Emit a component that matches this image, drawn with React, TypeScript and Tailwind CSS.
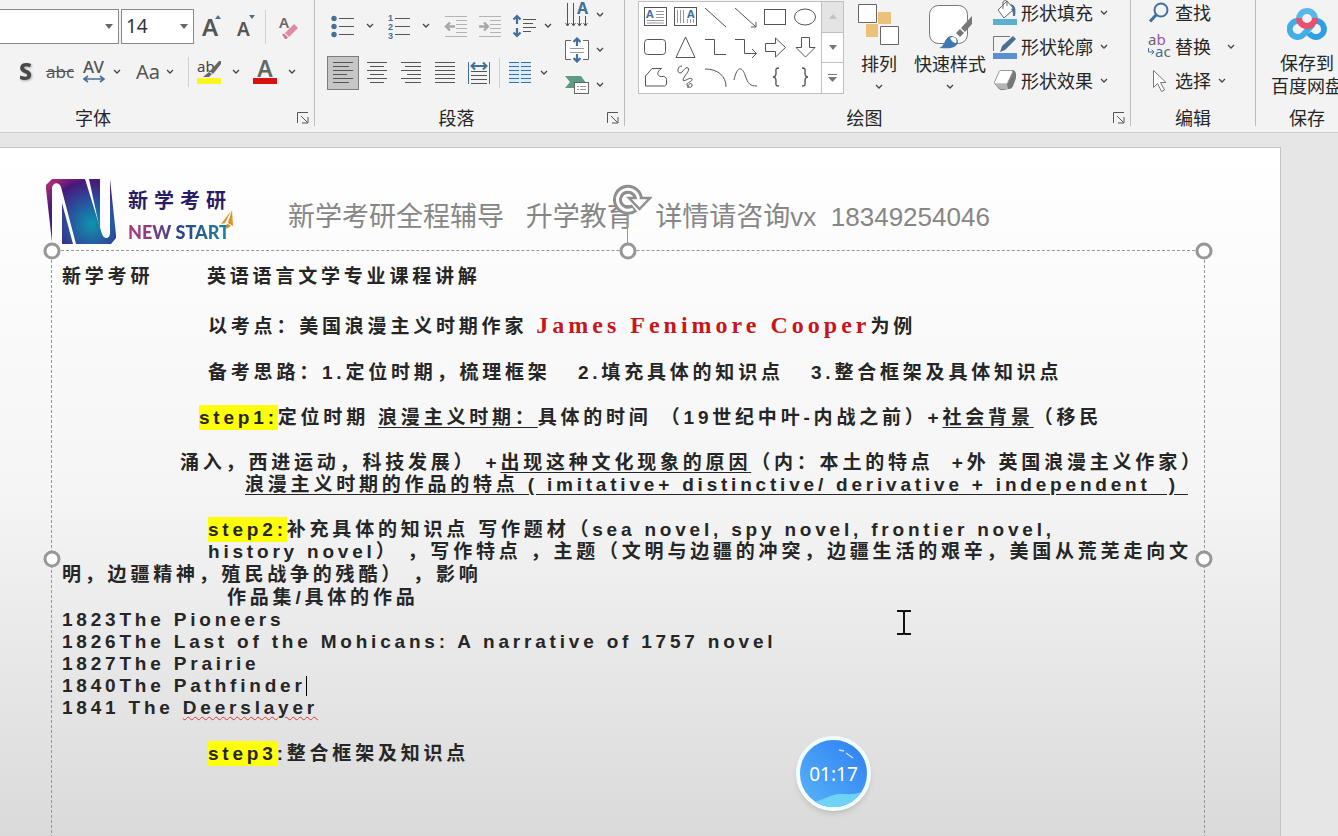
import type { ReactNode } from "react";

const CJK = "font-['Noto_Sans','Noto_Sans_CJK_SC',sans-serif]";

export default function App() {
  return (
    <div className={`h-screen flex flex-col overflow-hidden bg-[#e6e6e6] text-[#262626] ${CJK}`}>
      {/* Ribbon */}
      <header className="flex-none h-[133px] flex overflow-hidden bg-[#f3f3f3] border-b border-[#cfcfcf]">
        <FontGroup />
        <ParagraphGroup />
        <DrawingGroup />
        <EditGroup />
        <SaveGroup />
      </header>

      {/* Slide */}
      <main className="flex-1 min-h-0 mt-[14px] mr-[57px] border-t border-r border-[#c4c4c4] bg-linear-to-b from-white via-[#f5f5f5] to-[#dadada] overflow-hidden">
        <div className="h-[102px] flex items-start pl-[46px] pt-[30px]">
          <Logo />
          <p className="ml-[52px] mt-4 text-[26px] leading-[46px] text-[#868686] whitespace-pre font-['Liberation_Sans','Noto_Sans_CJK_SC',sans-serif]">
            <Wide>新学考研全程辅导</Wide>{"   "}<Wide>升学教育</Wide>{"   "}<Wide>详情请咨询</Wide>{"vx  18349254046"}
          </p>
        </div>
        <SlideText />
      </main>

      <IBeam />
      <Timer />
    </div>
  );
}

function Wide({ children }: { children: string }) {
  return <span className="text-[27px]">{children}</span>;
}

// ---------- Ribbon pieces ----------

interface GroupProps { title: string; className: string; launcher?: boolean; children: ReactNode }
function Group({ title, className, launcher, children }: GroupProps) {
  return (
    <section className={`flex-none h-[126px] flex flex-col border-r border-[#bdbdbd] ${className}`}>
      <div className="h-[110px] flex">{children}</div>
      <div className="flex items-center h-4 text-[18px] leading-4">
        <h2 className="flex-1 text-center">{title}</h2>
        {launcher && (
          <button aria-label={`${title}设置`} className="w-[26px] flex justify-end pr-[5px]">
            <svg width="12" height="12" viewBox="0 0 12 12" fill="none" stroke="#555">
              <path d="M.5 11V.5H11M4 4l6.500 6.500M11 5v6H5" />
            </svg>
          </button>
        )}
      </div>
    </section>
  );
}

function Chevron() {
  return (
    <svg width="8" height="6" viewBox="0 0 8 6" fill="none" stroke="#444" strokeWidth="1.300">
      <path d="M1 1l3 3 3-3" />
    </svg>
  );
}

interface ToolProps { label: string; className?: string; menu?: boolean; children: ReactNode }
function Tool({ label, className = "", menu, children }: ToolProps) {
  return (
    <button aria-label={label} className={`flex items-center ${className}`}>
      {children}
      {menu && <Chevron />}
    </button>
  );
}

function Combo({ label, value, className }: { label: string; value: string; className: string }) {
  return (
    <div className={`relative h-[35px] ${className}`}>
      <select aria-label={label} defaultValue={value} className="appearance-none w-full h-full bg-white border border-[#8a8a8a] pl-1 text-[19px] text-[#333]">
        <option value={value}>{value}</option>
      </select>
      <svg className="absolute right-1.5 top-[15px] pointer-events-none" width="8" height="5" viewBox="0 0 8 5">
        <path d="M0 0h8L4 5z" fill="#666" />
      </svg>
    </div>
  );
}

function FontGroup() {
  return (
    <Group title="字体" launcher className="w-[417px] -ml-[102px]">
      <div className="flex flex-col gap-3 pt-[9px] pl-[102px]">
        <div className="flex items-center">
          <Combo label="字体名称" value="" className="w-[221px] -ml-[102px]" />
          <Combo label="字号" value="14" className="w-[73px] ml-[2px]" />
          <Tool label="增大字号" className="ml-[7px]">
            <svg className="overflow-visible" width="24" height="28" viewBox="0 0 24 28">
              <text x="1" y="23" fontSize="24" fontWeight="600" fill="#555" fontFamily="Noto Sans">A</text>
              <path d="M14 6l3-4 3 4z" fill="#4a6f95" />
            </svg>
          </Tool>
          <Tool label="减小字号" className="ml-[11px]">
            <svg className="overflow-visible" width="24" height="28" viewBox="0 0 24 28">
              <text x="1" y="23" fontSize="19" fontWeight="600" fill="#555" fontFamily="Noto Sans">A</text>
              <path d="M13 2h6l-3 4z" fill="#4a6f95" />
            </svg>
          </Tool>
          <i className="w-px h-[34px] bg-[#d0d0d0] ml-[5px]" />
          <Tool label="清除格式" className="ml-[12px]">
            <svg className="overflow-visible" width="20" height="26" viewBox="0 0 20 26">
              <text x="1" y="14" fontSize="15" fontWeight="600" fill="#666" fontFamily="Noto Sans">A</text>
              <path d="M7 19l9-9 4 4-9 9z" fill="#dd8ba0" />
              <path d="M4 20.500l2-1 4 4-1.500 1.500H7z" fill="#d17890" />
            </svg>
          </Tool>
        </div>
        <div className="flex items-center h-8">
          <Tool label="文字阴影" className="ml-[18px]">
            <svg className="overflow-visible" width="16" height="24" viewBox="0 0 16 24">
              <text x="1" y="20" fill="#484848" fontFamily="Noto Sans" fontSize="23" fontWeight="800" className="drop-shadow-[1px_1px_1px_#aaa]">S</text>
            </svg>
          </Tool>
          <Tool label="删除线" className="ml-[14px] text-[17px] leading-6 text-[#555] line-through">
            <span className="w-6 flex justify-center">abc</span>
          </Tool>
          <Tool label="字符间距" menu className="ml-[11px] gap-2">
            <svg className="overflow-visible" width="22" height="24" viewBox="0 0 22 24">
              <text x="0" y="13" fontSize="17" fontWeight="500" fill="#555" fontFamily="Noto Sans">AV</text>
              <path d="M1 19h20M5 16l-4 3 4 3M17 16l4 3-4 3" fill="none" stroke="#4a6f95" strokeWidth="1.600" />
            </svg>
          </Tool>
          <Tool label="更改大小写" menu className="ml-[15px] gap-1.5 text-[20px] leading-6 text-[#555]">
            <span className="w-6">Aa</span>
          </Tool>
          <i className="w-px h-[30px] bg-[#d0d0d0] ml-[14px]" />
          <Tool label="文本突出显示" menu className="ml-2 gap-[11px]">
            <svg className="overflow-visible" width="24" height="26" viewBox="0 0 24 26">
              <text x="0" y="13" fontSize="15" fill="#444" fontFamily="Noto Sans">ab</text>
              <rect y="19" width="24" height="6" fill="#f8f520" />
              <path d="M22 2l-9 10 3 3L24 5V2zM12 13l-6 5h6l3-3z" fill="#666" />
            </svg>
          </Tool>
          <Tool label="字体颜色" menu className="ml-[13px] gap-[11px]">
            <svg className="overflow-visible" width="24" height="26" viewBox="0 0 24 26">
              <text x="12" y="18" fontSize="23" fontWeight="600" fill="#666" textAnchor="middle" fontFamily="Noto Sans">A</text>
              <rect y="19" width="24" height="6" fill="#d8110f" />
            </svg>
          </Tool>
        </div>
      </div>
    </Group>
  );
}

function AlignIcon({ d }: { d: string }) {
  return (
    <svg width="20" height="22" viewBox="0 0 20 22" stroke="#555">
      <path d={d} />
    </svg>
  );
}

function ParagraphGroup() {
  return (
    <Group title="段落" launcher className="w-[310px]">
      <div className="w-[250px] flex flex-col gap-[13px] pt-[9px]">
        <div className="flex items-center h-[34px] pl-[15px]">
          <Tool label="项目符号" menu className="gap-3">
            <svg width="24" height="24" viewBox="0 0 24 24">
              <path d="M9 4.500h15M9 12.500h15M9 20.500h15" stroke="#555" />
              <g fill="#4a6f95"><circle cx="4" cy="4.500" r="2.700" /><circle cx="4" cy="12.500" r="2.700" /><circle cx="4" cy="20.500" r="2.700" /></g>
            </svg>
          </Tool>
          <Tool label="编号" menu className="ml-3 gap-3">
            <svg className="overflow-visible" width="24" height="26" viewBox="0 0 24 26">
              <path d="M9 5.500h15M9 13.500h15M9 21.500h15" stroke="#555" />
              <g fill="#4a6f95" fontSize="9" fontWeight="600" fontFamily="Liberation Sans">
                <text x="2" y="8">1</text><text x="2" y="17">2</text><text x="2" y="26">3</text>
              </g>
            </svg>
          </Tool>
          <Tool label="减少缩进" className="ml-[14px]">
            <svg width="24" height="24" viewBox="0 0 24 24" stroke="#b4b4b4" fill="none">
              <path d="M1 2.500h22M12 6.500h11M12 10.500h11M12 14.500h11M12 18.500h11M1 22.500h22" />
              <path d="M11 12.500H3M6 8.500l-4 4 4 4" strokeWidth="2.400" stroke="#a8a8a8" />
            </svg>
          </Tool>
          <Tool label="增加缩进" className="ml-[10px]">
            <svg width="24" height="24" viewBox="0 0 24 24" stroke="#b4b4b4" fill="none">
              <path d="M1 2.500h22M12 6.500h11M12 10.500h11M12 14.500h11M12 18.500h11M1 22.500h22" />
              <path d="M1 12.500h8M6 8.500l4 4-4 4" strokeWidth="2.400" stroke="#a8a8a8" />
            </svg>
          </Tool>
          <Tool label="行距" menu className="ml-[10px] gap-2">
            <svg width="24" height="24" viewBox="0 0 24 24" fill="none">
              <path d="M11 5.500h13M11 9.500h10M11 13.500h13M11 17.500h8" stroke="#555" />
              <path d="M5 2v8M1.500 5.500L5 2l3.500 3.500M5 14v8M1.500 18.500L5 22l3.500-3.500" stroke="#41709f" strokeWidth="2.200" />
            </svg>
          </Tool>
        </div>
        <div className="flex items-center h-[34px] pl-3">
          <div className="flex gap-[2px]">
            <Tool label="左对齐" className="w-8 h-[34px] justify-center bg-[#c6c6c6] border border-[#7d7d7d]">
              <AlignIcon d="M0 .500h20M0 4.500h16M0 8.500h20M0 12.500h14M0 16.500h20M0 20.500h16" />
            </Tool>
            <Tool label="居中" className="w-8 h-[34px] justify-center">
              <AlignIcon d="M0 .500h20M3 4.500h14M0 8.500h20M3 12.500h14M0 16.500h20M3 20.500h14" />
            </Tool>
            <Tool label="右对齐" className="w-8 h-[34px] justify-center">
              <AlignIcon d="M0 .500h20M4 4.500h16M0 8.500h20M6 12.500h14M0 16.500h20M4 20.500h16" />
            </Tool>
            <Tool label="两端对齐" className="w-8 h-[34px] justify-center">
              <AlignIcon d="M0 .500h20M0 4.500h20M0 8.500h20M0 12.500h20M0 16.500h20M0 20.500h20" />
            </Tool>
            <Tool label="分散对齐" className="w-8 h-[34px] justify-center">
              <svg width="22" height="24" viewBox="0 0 22 24" fill="none">
                <path d="M.5 1v22M21.500 1v22" stroke="#41709f" />
                <path d="M3 10.500h16M3 14.500h16M3 18.500h16M3 22.500h16" stroke="#555" />
                <path d="M4 5h14M7 1.500L3.500 5 7 8.500M15 1.500L18.500 5 15 8.500" stroke="#41709f" strokeWidth="2" />
              </svg>
            </Tool>
          </div>
          <i className="w-px h-[30px] bg-[#d0d0d0] ml-1" />
          <Tool label="分栏" menu className="ml-[9px] gap-[9px]">
            <svg width="22" height="24" viewBox="0 0 22 24" stroke="#41709f">
              <path fill="#dcebf8" stroke="none" d="M0 1h22v21H0z" />
              <path d="M0 1.500h10M0 5.500h10M0 9.500h10M0 13.500h10M0 17.500h10M0 21.500h10M12 1.500h10M12 5.500h10M12 9.500h10M12 13.500h10M12 17.500h10M12 21.500h10" />
            </svg>
          </Tool>
        </div>
      </div>
      <div className="flex flex-col">
        <Tool label="文字方向" menu className="h-[30px] gap-[7px]">
          <svg className="overflow-visible" width="24" height="26" viewBox="0 0 24 26" fill="none" stroke="#555">
            <path d="M2.500 1v23M8.500 1v23M14.500 14v10M20.500 14v10M.5 21l2 3 2-3M6.500 21l2 3 2-3M12.500 21l2 3 2-3M18.500 21l2 3 2-3" />
            <text x="12" y="12" fontSize="16" fontWeight="700" fill="#41709f" stroke="none" fontFamily="Noto Sans">A</text>
          </svg>
        </Tool>
        <Tool label="对齐文本" menu className="h-10 gap-[7px]">
          <svg width="24" height="26" viewBox="0 0 24 26" fill="none">
            <path d="M.5 3.500h23v19H.5z" fill="#fff" />
            <path d="M6 3.500H.5v19H6M18 3.500h5.500v19H18" stroke="#666" />
            <path d="M5 11.500h14M5 15.500h14" stroke="#999" />
            <path d="M12 9V2M8.500 5L12 1.500 15.500 5M12 17v7M8.500 21l3.500 3.500 3.500-3.500" stroke="#41709f" strokeWidth="2.200" />
          </svg>
        </Tool>
        <Tool label="转换为 SmartArt" menu className="h-[30px] gap-[7px]">
          <svg width="24" height="20" viewBox="0 0 24 20">
            <path d="M0 1h16l5 7-4 5H0l5-6z" fill="#5d9b82" />
            <rect x="9.500" y="7.500" width="14" height="11" fill="#fff" stroke="#666" />
            <path d="M12 11.500h2M15 11.500h6M12 14.500h2M15 14.500h6" stroke="#999" />
          </svg>
        </Tool>
      </div>
    </Group>
  );
}

const shapes: { name: string; icon: ReactNode }[] = [
  { name: "文本框", icon: <><rect x="1.500" y="2.500" width="22" height="18" fill="#fff" /><path d="M13 6.500h8M13 9.500h8M13 12.500h8M4 15.500h17M4 18h17" stroke="#999" /><text x="3" y="13" fontSize="11" fontWeight="700" fill="#41709f" stroke="none">A</text></> },
  { name: "竖排文本框", icon: <><rect x="1.500" y="2.500" width="22" height="18" fill="#fff" /><path d="M4.500 5v13M7.500 5v13M10.500 5v13M14.500 14v4M17.500 14v4M20.500 14v4" stroke="#999" /><text x="14" y="13" fontSize="11" fontWeight="700" fill="#41709f" stroke="none">A</text></> },
  { name: "直线", icon: <path d="M2 3l21 19" /> },
  { name: "箭头", icon: <path d="M2 3l21 19M23 17v5h-5" /> },
  { name: "矩形", icon: <rect x="1.500" y="4.500" width="21" height="15" /> },
  { name: "椭圆", icon: <ellipse cx="12" cy="12" rx="10.500" ry="8" /> },
  { name: "圆角矩形", icon: <rect x="1.500" y="4.500" width="21" height="15" rx="3" /> },
  { name: "三角形", icon: <path d="M12.500 2L22 22.500H3z" /> },
  { name: "肘形连接符", icon: <path d="M2 4.500h9.500v15H23" /> },
  { name: "肘形箭头", icon: <path d="M2 4.500h9.500v14H23M19 14l4.500 4.500L19 23" /> },
  { name: "右箭头", icon: <path d="M2.500 8.500h10V3l10 9.500-10 9.500v-5.500h-10z" /> },
  { name: "下箭头", icon: <path d="M8.500 2.500h8v10H22L12.500 22 3 12.500h5.500z" /> },
  { name: "任意多边形", icon: <path d="M9 3.500h9.500c-5 3-5 8 0 8 3.500-.500 5 1 5 3v5l-2 1.500h-19V11z" /> },
  { name: "自由曲线", icon: <path d="M9 1C4 1 4 8 7 8s5-7 8-5-5 9-5 12 8-4 9-1-6 3-5 6 5 3 5 0-5-1-4 3" /> },
  { name: "弧形", icon: <path d="M2 4c13 0 21 7 21 18" /> },
  { name: "曲线", icon: <path d="M1 15C4 1 9 1 12 10s5 11 12 11" /> },
  { name: "左大括号", icon: <path d="M16 3c-4 0-3 2-3 5s-1 4-3 4c2 0 3 1 3 4s-1 5 3 5" strokeWidth="1.400" /> },
  { name: "右大括号", icon: <path d="M9 3c4 0 3 2 3 5s1 4 3 4c-2 0-3 1-3 4s1 5-3 5" strokeWidth="1.400" /> },
];

function DrawingGroup() {
  return (
    <Group title="绘图" launcher className="w-[506px]">
      <div className="flex ml-[13px] mt-px h-[93px] border border-[#c0c0c0] bg-white">
        <div className="grid grid-cols-[repeat(6,30px)] grid-rows-[repeat(3,30px)] w-[182px] pl-px">
          {shapes.map((s) => (
            <button key={s.name} aria-label={s.name} className="flex items-center justify-center">
              <svg width="25" height="24" viewBox="0 0 25 24" fill="none" stroke="#555" fontFamily="Noto Sans">{s.icon}</svg>
            </button>
          ))}
        </div>
        <div className="w-[22px] border-l border-[#c0c0c0] flex flex-col divide-y divide-[#c0c0c0]">
          <button aria-label="上一行" className="flex-1 flex items-center justify-center bg-[#e4e4e4]">
            <svg width="8" height="5"><path d="M0 5h8L4 0z" fill="#c3c3c3" /></svg>
          </button>
          <button aria-label="下一行" className="flex-1 flex items-center justify-center">
            <svg width="8" height="5"><path d="M0 0h8L4 5z" fill="#777" /></svg>
          </button>
          <button aria-label="其他" className="flex-1 flex items-center justify-center">
            <svg width="9" height="9"><path d="M0 .5h9" stroke="#777" /><path d="M0 3h9L4.500 8z" fill="#777" /></svg>
          </button>
        </div>
      </div>
      <button className="w-[60px] ml-[5px] flex flex-col items-center pt-[3px] text-[18px] leading-[22px]">
        <svg width="42" height="45" viewBox="0 0 42 45">
          <path d="M20 9h13v12H20zM8 21h12v13H8z" fill="#ecc27b" />
          <path d="M.5 1.500h18v18H.5zM22.500 23.500h18v18h-18z" fill="#fff" stroke="#666" />
        </svg>
        <span className="mt-[5px] mb-[9px] h-[22px]">排列</span>
        <Chevron />
      </button>
      <button className="w-[80px] ml-px flex flex-col items-center pt-[3px] text-[18px] leading-[22px]">
        <svg width="46" height="50" viewBox="0 0 46 50">
          <rect x="2.500" y="2.500" width="38" height="38" rx="9" fill="#fff" stroke="#777" />
          <path d="M45 13v8l-7 8-4-4zM33 26l4 4-4 4-4-4z" fill="#777" />
          <path d="M12 45c7-2 5-12 13-12 7 1 8 8 2 11-4 2-9 1-15 1z" fill="#3f77b0" />
          <path d="M23 35c4-3 8 1 6 5-2 0-5-2-6-5z" fill="#fff" />
        </svg>
        <span className="h-[22px] mb-[9px] whitespace-nowrap">快速样式</span>
        <Chevron />
      </button>
      <div className="flex flex-col ml-[3px] -mt-1">
        <LabelTool text="形状填充">
          <path d="M5 10L14 1l7 8-10 9z" fill="#fff" stroke="#666" />
          <path d="M10 9V2c1-2 4-2 4 0v4" fill="none" stroke="#666" />
          <path d="M17 4c6 1 6 6 5 12h-2c0-3 0-5-2-7l2-1z" fill="#4a6f95" />
          <path d="M0 19h24v6H0z" fill="#5bb0d0" />
        </LabelTool>
        <LabelTool text="形状轮廓">
          <path d="M.5 17V2.500H17" fill="none" stroke="#777" />
          <path d="M7 18l2-6L20 2l3 3-11 11z" fill="#4a6f95" />
          <path d="M0 19h24v6H0z" fill="#5b8fd0" />
        </LabelTool>
        <LabelTool text="形状效果">
          <path d="M1 15l5 6c1 1 2 1 4 1l6-1c2 0 3-1 4-3l3-8V6c0-2-2-4-4-4z" fill="#777" />
          <path d="M8 2.500h10c1 0 2 1 1.500 2L15 14c0 1-1 2-2 2H3c-1 0-2-1-1.500-2L6 4c0-1 1-1.500 2-1.500z" fill="#fff" stroke="#999" />
          <path d="M2 16h12l1 5H7z" fill="#b5b5b5" />
        </LabelTool>
      </div>
    </Group>
  );
}

function LabelTool({ text, children }: { text: string; children: ReactNode }) {
  return (
    <button className="h-[34px] flex items-center text-[18px] leading-[22px] whitespace-nowrap">
      <svg width="24" height="26" viewBox="0 0 24 26">{children}</svg>
      <span className="ml-1 mr-[7px]">{text}</span>
      <Chevron />
    </button>
  );
}

function EditGroup() {
  return (
    <Group title="编辑" className="w-[125px]">
      <div className="flex flex-col pl-4 -mt-1 text-[18px] leading-[22px]">
        <button className="h-[34px] flex items-center gap-[3px]">
          <svg width="25" height="24" viewBox="0 0 25 24" fill="none" stroke="#41709f">
            <circle cx="14" cy="9" r="6.500" strokeWidth="2" />
            <path d="M9.500 13.500L3 20.500" strokeWidth="3" />
          </svg>
          查找
        </button>
        <button className="h-[34px] flex items-center gap-[3px]">
          <svg className="overflow-visible" width="25" height="26" viewBox="0 0 25 26" fontFamily="Noto Sans" fontSize="15">
            <text x="1" y="11" fill="#666">a<tspan fill="#9455a8">b</tspan></text>
            <text x="8" y="23" fill="#41709f">a<tspan fill="#666">c</tspan></text>
            <path d="M1.500 14v4H7M4.500 15.500L7 18l-2.500 2.500" fill="none" stroke="#41709f" />
          </svg>
          <span className="mr-[13px]">替换</span>
          <Chevron />
        </button>
        <button className="h-[34px] flex items-center gap-[3px]">
          <svg width="25" height="24" viewBox="0 0 25 24" fill="#fff" stroke="#777">
            <path d="M6.500 1.500v17l4-4 4 8 3-1.500-4-7.500h5.500z" />
          </svg>
          <span className="mr-1">选择</span>
          <Chevron />
        </button>
      </div>
    </Group>
  );
}

function SaveGroup() {
  return (
    <Group title="保存" className="w-[103px]">
      <button className="w-full h-full flex flex-col items-center pt-[7px] text-[18px] leading-[23px] whitespace-nowrap">
        <svg width="40" height="33" viewBox="0 0 40 33" fill="none" strokeWidth="6">
          <path d="M11.500 14a8 8 0 1 0 5 13.500L26 17" stroke="#41aee8" />
          <path d="M22 26a8 8 0 1 0 6.500-12" stroke="#2f9fe2" />
          <path d="M12 12a8 8 0 1 1 16 0" stroke="#58b8ea" />
          <path d="M12 11a8 8 0 0 0 16 0" stroke="#e8506e" />
        </svg>
        <span className="mt-3">保存到</span>
        <span>百度网盘</span>
      </button>
    </Group>
  );
}

// ---------- Slide ----------

function Logo() {
  return (
    <div className="flex-none w-[190px] flex">
      <svg width="70" height="67" viewBox="0 0 70 67">
        <defs>
          <radialGradient id="n-fill" gradientUnits="userSpaceOnUse" cx="46" cy="46" r="58">
            <stop offset="0" stopColor="#0d94ad" />
            <stop offset=".42" stopColor="#2a4f9c" />
            <stop offset=".75" stopColor="#47187a" />
            <stop offset="1" stopColor="#a62a78" />
          </radialGradient>
        </defs>
        <g fill="url(#n-fill)">
          <path d="M6 1h33l17 55c2 6 8 5 8-1V1l6 56v3l-5 6H30L15 9C13 4 7 4 6 10v54L0 11V7z" />
          <path d="M16 25v41h11z" />
          <path d="M43 1h11v51z" />
        </g>
      </svg>
      <div className="ml-3 mt-[10px] flex flex-col">
        <span className="text-[20px] leading-[26px] font-bold tracking-[6px] text-[#2a1b66]">新学考研</span>
        <span className="mt-[6px] text-[18px] leading-6 font-black font-['Lato',sans-serif] whitespace-nowrap bg-linear-to-r from-[#b8327c] via-[#2b3f86] to-[#12909f] bg-clip-text text-transparent">NEW START</span>
      </div>
      <svg className="-ml-3 mt-8 flex-none" width="14" height="20" viewBox="0 0 14 20">
        <path d="M12 0l1 16-5-3zM11 1L1 14l4-1zM8 14l3 2-5 3 1-5z" fill="#e58f1c" />
      </svg>
    </div>
  );
}

function Handle({ className }: { className: string }) {
  return <span className={`absolute w-[17px] h-[17px] rounded-full border-3 border-[#979797] bg-white -translate-x-1/2 -translate-y-1/2 ${className}`} />;
}

function Mark({ children }: { children: ReactNode }) {
  return <mark className="bg-[#ffff0a] text-inherit py-[2px]">{children}</mark>;
}

function SlideText() {
  return (
    <article className="relative ml-[51px] mr-[75px] min-h-[618px] border border-dashed border-[#979797] pt-[15px] pl-[10px] text-[19px] leading-[22px] font-bold tracking-[0.2em] whitespace-pre text-[#262626] font-['Liberation_Sans','Noto_Sans_CJK_SC',sans-serif]">
      {/* rotate grip */}
      <svg className="absolute left-1/2 -top-[71px] -ml-4" width="40" height="64" viewBox="0 0 40 64" fill="none">
        <path d="M15.500 32v32" stroke="#979797" />
        <path d="M26.500 20a10.500 10.500 0 1 0-4 8" stroke="#8f8f8f" strokeWidth="9" />
        <path d="M17 18h21L27.500 29z" fill="#fff" stroke="#8f8f8f" strokeWidth="2.500" />
        <path d="M26.500 21v-1a10.500 10.500 0 1 0-5.500 9" stroke="#fff" strokeWidth="3" />
      </svg>
      <Handle className="left-0 top-0" />
      <Handle className="left-1/2 top-0" />
      <Handle className="left-full top-0" />
      <Handle className="left-0 top-1/2" />
      <Handle className="left-full top-1/2" />

      <p className="flex"><span className="w-[145px]">新学考研</span>英语语言文学专业课程讲解</p>
      <p className="mt-[25px] pl-[146px]">
        {"以考点：美国浪漫主义时期作家 "}
        <span className="text-[24px] leading-none tracking-[4px] text-[#c8171c] font-['Liberation_Serif',serif]">James Fenimore Cooper</span>
        为例
      </p>
      <p className="mt-6 pl-[146px]">{"备考思路：1.定位时期，梳理框架   2.填充具体的知识点   3.整合框架及具体知识点"}</p>
      <p className="mt-[23px] pl-[137px]">
        <Mark>step1:</Mark>{"定位时期 "}<u className="underline-offset-3">浪漫主义时期：</u>{"具体的时间 （19世纪中叶-内战之前）+"}<u className="underline-offset-3">社会背景</u>（移民
      </p>
      <p className="mt-[23px] pl-[118px]">
        {"涌入，西进运动，科技发展） +"}<u className="underline-offset-3">出现这种文化现象的原因</u>{"（内：本土的特点  +外 英国浪漫主义作家）"}
      </p>
      <p className="pl-[183px]"><u className="underline-offset-3">{"浪漫主义时期的作品的特点 ( imitative+ distinctive/ derivative + independent  ) "}</u></p>
      <p className="mt-[23px] pl-[146px]">
        <Mark>step2:</Mark>{"补充具体的知识点 写作题材（sea novel, spy novel, frontier novel,"}
      </p>
      <p className="pl-[146px]">{"history novel） ，写作特点 ，主题（文明与边疆的冲突，边疆生活的艰辛，美国从荒芜走向文"}</p>
      <p className="leading-[23px]">{"明，边疆精神，殖民战争的残酷） ，影响"}</p>
      <p className="leading-[23px] pl-[165px]">作品集/具体的作品</p>
      <p>1823The Pioneers</p>
      <p>1826The Last of the Mohicans: A narrative of 1757 novel</p>
      <p>1827The Prairie</p>
      <p className="flex items-center">1840The Pathfinder<i className="w-px h-5 bg-black" /></p>
      <p>1841 The <span className="underline decoration-wavy decoration-1 decoration-[#d83b3b] underline-offset-2">Deerslayer</span></p>
      <p className="mt-6 pl-[146px]"><Mark>step3</Mark>:整合框架及知识点</p>
    </article>
  );
}

// Mouse pointer over the text box
function IBeam() {
  return (
    <svg className="absolute left-[897px] top-[609px]" width="14" height="27" viewBox="0 0 14 27" fill="none" stroke="#111" strokeWidth="2">
      <path d="M0 2h6l1 1 1-1h6M7 3v21M0 25h6l1-1 1 1h6" />
    </svg>
  );
}

// Floating recording timer
function Timer() {
  return (
    <div className="absolute left-[796px] top-[736px] w-[75px] h-[75px] rounded-full border-4 border-[#f2fdff] shadow-md overflow-hidden bg-linear-to-tr from-[#5ab4f8] to-[#2f7df2] flex items-center justify-center">
      <svg className="absolute inset-0" width="67" height="67" viewBox="0 0 67 67">
        <path d="M10 62c12 0 20-8 30-8 8 0 14 1 22-2v15H10z" fill="#6fd3f8" />
        <path d="M39 10l5 1M46 13l7 5" stroke="#bfe3ff" strokeWidth="1.500" fill="none" />
      </svg>
      <time className="relative text-[19px] leading-6 text-white">01:17</time>
    </div>
  );
}
